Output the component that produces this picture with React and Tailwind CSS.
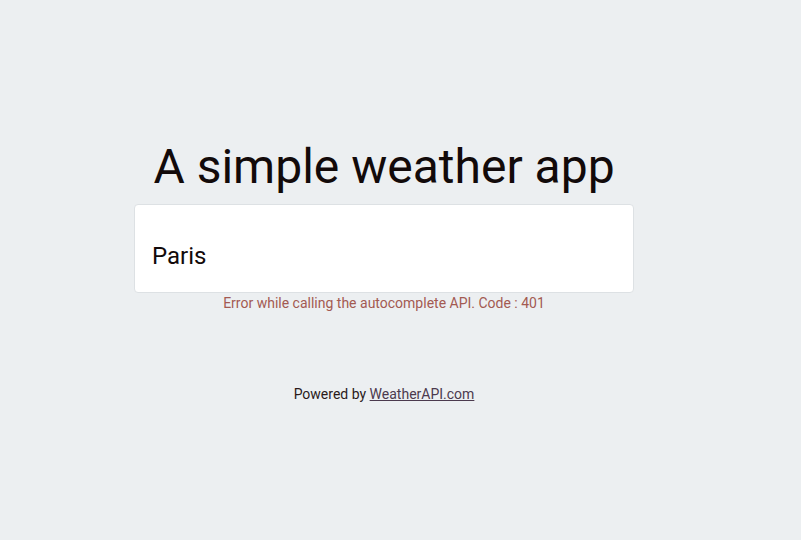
export default function App() {
  return (
    <div className="min-h-[540px] bg-[#eceff1] font-['Roboto',sans-serif] text-[#120a0a]">
      <div className="ml-[134px] w-[500px] pt-[137px] flex flex-col items-center">
        <h1 className="text-[48px] leading-[60px] font-normal mb-[7px]">
          A simple weather app
        </h1>
        <div className="w-full h-[89px] bg-white border border-[#dde1e4] rounded-[4px] flex items-end px-[17px] pb-[22px]">
          <input
            defaultValue="Paris"
            className="w-full text-[24px] leading-[28px] text-[#120a0a] outline-none bg-transparent"
          />
        </div>
        <p className="text-[14px] leading-[18px] text-[#a35a52] mt-[1px]">
          Error while calling the autocomplete API. Code : 401
        </p>
        <p className="mt-[73px] text-[14px] leading-[18px] text-[#2a1a1a]">
          Powered by{" "}
          <a href="#" className="underline text-[#4b3a4e]">
            WeatherAPI.com
          </a>
        </p>
      </div>
    </div>
  );
}
